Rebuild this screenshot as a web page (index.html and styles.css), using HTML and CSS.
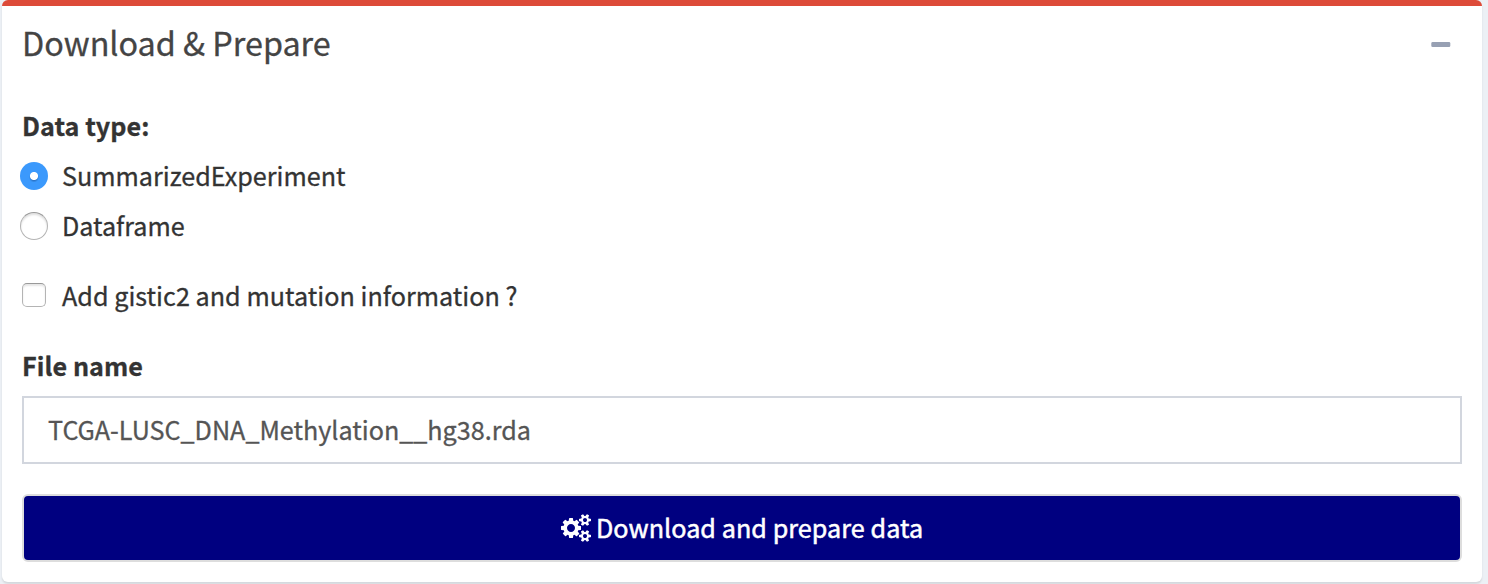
FILE: index.html
```
<!DOCTYPE html>
<html lang="en">
<head>
<meta charset="utf-8">
<title>Download &amp; Prepare</title>
<link rel="stylesheet" href="styles.css">
</head>
<body>
<section class="box">
  <header class="box-header">
    <h3 class="box-title">Download &amp; Prepare</h3>
    <button class="collapse" type="button" aria-label="Collapse"><svg width="20" height="6" viewBox="0 0 20 6"><rect x="0.3" y="0.1" width="19" height="5" rx="1.3" fill="#97a0b3"/></svg></button>
  </header>
  <div class="box-body">
    <div class="label label-type">Data type:</div>
    <label class="option"><span class="radio radio-on"></span><span>SummarizedExperiment</span></label>
    <label class="option"><span class="radio"></span><span>Dataframe</span></label>
    <label class="option option-check"><span class="check"></span><span class="text-gistic">Add gistic2 and mutation information ?</span></label>
    <div class="label label-file">File name</div>
    <div class="field">TCGA-LUSC_DNA_Methylation__hg38.rda</div>
    <button class="submit" type="button">
      <svg class="cogs" width="30" height="28" viewBox="0 -256 1920 1792" fill="#fff" fill-rule="evenodd"><path d="M896 640q0 106-75 181t-181 75-181-75-75-181 75-181 181-75 181 75 75 181zm768 512q0-52-38-90t-90-38-90 38-38 90q0 53 37.500 90.500t90.500 37.500 90.500-37.500 37.500-90.500zm0-1024q0-52-38-90t-90-38-90 38-38 90q0 53 37.500 90.500t90.500 37.500 90.500-37.500 37.500-90.500zm-384 421v185q0 10-7 19.500t-16 10.500l-155 24q-11 35-32 76 34 48 90 115 7 11 7 20 0 12-7 19-23 30-82.500 89.500t-78.500 59.500q-11 0-21-7l-115-90q-37 19-77 31-11 108-23 155-7 24-30 24h-186q-11 0-20-7.500t-10-17.500l-23-153q-34-10-75-31l-118 89q-7 7-20 7-11 0-21-8-144-133-144-160 0-9 7-19 10-14 41-53t47-61q-23-44-35-82l-152-24q-10-1-17-9.500t-7-19.500v-185q0-10 7-19.500t16-10.500l155-24q11-35 32-76-34-48-90-115-7-11-7-20 0-12 7-20 22-30 82-89t79-59q11 0 21 7l115 90q34-18 77-32 11-108 23-154 7-24 30-24h186q11 0 20 7.500t10 17.500l23 153q34 10 75 31l118-89q8-7 20-7 11 0 21 8 144 133 144 160 0 8-7 19-12 16-42 54t-45 60q23 48 34 82l152 23q10 2 17 10.500t7 19.500zm640 533v140q0 16-149 31-12 27-30 52 51 113 51 138 0 4-4 7-122 71-124 71-8 0-46-47t-52-68q-20 2-30 2t-30-2q-14 21-52 68t-46 47q-2 0-124-71-4-3-4-7 0-25 51-138-18-25-30-52-149-15-149-31v-140q0-16 149-31 13-29 30-52-51-113-51-138 0-4 4-7 4-2 35-20t59-34 30-16q8 0 46 46.500t52 67.500q20-2 30-2t30 2q51-71 92-112l6-2q4 0 124 70 4 3 4 7 0 25-51 138 17 23 30 52 149 15 149 31zm0-1024v140q0 16-149 31-12 27-30 52 51 113 51 138 0 4-4 7-122 71-124 71-8 0-46-47t-52-68q-20 2-30 2t-30-2q-14 21-52 68t-46 47q-2 0-124-71-4-3-4-7 0-25 51-138-18-25-30-52-149-15-149-31v-140q0-16 149-31 13-29 30-52-51-113-51-138 0-4 4-7 4-2 35-20t59-34 30-16q8 0 46 46.500t52 67.500q20-2 30-2t30 2q51-71 92-112l6-2q4 0 124 70 4 3 4 7 0 25-51 138 17 23 30 52 149 15 149 31z"/></svg>
      <span class="text-submit">Download and prepare data</span>
    </button>
  </div>
</section>
</body>
</html>
```
FILE: styles.css
```
* { box-sizing: border-box; }

body {
  margin: 0;
  height: 584px;
  overflow: hidden;
  padding: 0 6px 0 2px;
  background: #ecf0f5;
  color: #333;
  font-family: "Noto Sans CJK SC", "Noto Sans", sans-serif;
  font-size: 25.15px;
  line-height: 40px;
  white-space: nowrap;
  -webkit-text-stroke: 0.3px;
}

.box {
  height: 582px;
  background: #fff;
  border-top: 6px solid #dd4b39;
  border-radius: 6px;
  box-shadow: 0 2px 2px rgba(0, 0, 0, 0.1);
}

.box-header {
  display: flex;
  justify-content: space-between;
  height: 80px;
  padding: 16px 31px 0 20px;
}

.box-title {
  margin: 0;
  color: #444;
  font-size: 32.35px;
  font-weight: 400;
  line-height: 40px;
}

.collapse {
  display: flex;
  height: 6px;
  margin-top: 20px;
  padding: 0;
  border: 0;
  background: none;
}

.box-body {
  display: flex;
  flex-direction: column;
  padding: 19px 20px 0;
}

.label {
  font-weight: 700;
  letter-spacing: 0.06px;
}

.label-type { margin-bottom: 10px; }

.option {
  display: flex;
  height: 40px;
  margin-bottom: 10px;
}

.radio {
  width: 28px;
  height: 28px;
  margin: 7px 14px 0 -2px;
  border: 1px solid #b4b4b4;
  border-top-color: #999;
  border-radius: 50%;
  background: #fff;
  box-shadow: inset 0 2px 2px rgba(0, 0, 0, 0.12);
}

.radio-on {
  border: 0;
  background: radial-gradient(circle at 14px 14px, #fff 3.6px, transparent 4.5px), radial-gradient(circle at 14px 15.5px, #2b75c8 3px, #3b99fc 5px);
  box-shadow: none;
}

.option-check { margin: 20px 0 30px; }

.text-gistic { letter-spacing: 0.03px; }

.check {
  width: 24px;
  height: 24px;
  margin: 8px 16px 0 0;
  border: 1px solid #b4b4b4;
  border-top-color: #999;
  border-radius: 5px;
  background: #fff;
  box-shadow: inset 0 2px 2px rgba(0, 0, 0, 0.1);
}

.label-file { margin-bottom: 11px; }

.field {
  height: 68px;
  padding: 11px 24px;
  border: 2px solid #d2d6de;
  color: #555;
}

.submit {
  display: flex;
  justify-content: center;
  height: 68px;
  margin-top: 30px;
  padding: 11px 0;
  border: 2px solid #ddd;
  border-radius: 6px;
  background: #000080;
  color: #fff;
  font: inherit;
}

.text-submit {
  letter-spacing: 0.06px;
  -webkit-text-stroke: 0.5px;
}

.cogs { margin: 7px 5px 0 0; }
```
